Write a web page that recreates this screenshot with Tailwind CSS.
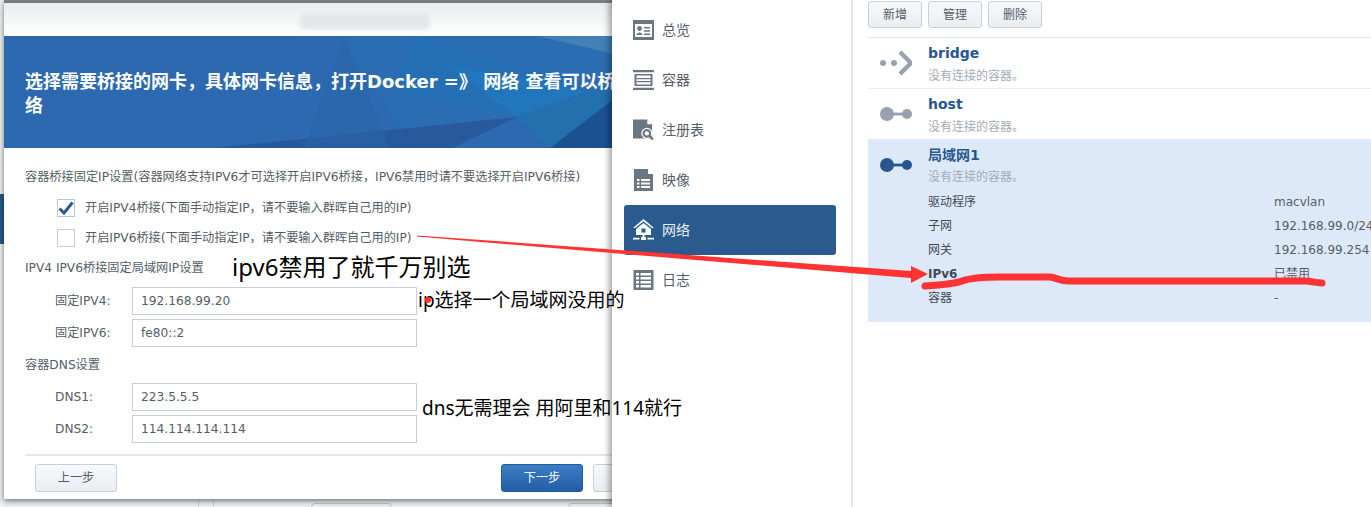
<!DOCTYPE html>
<html lang="zh-CN">

<head>
    <meta charset="UTF-8">
    <meta name="viewport" content="width=device-width, initial-scale=1.0">
    <script src="https://cdn.jsdelivr.net/npm/@tailwindcss/browser@4"></script>
    <title>Docker 网络设置</title>
</head>

<body class="bg-white">
    <div class="relative flex h-[507px] w-[1371px] overflow-hidden font-[family-name:'DejaVu_Sans','Noto_Sans_CJK_SC',sans-serif] text-xs text-[#555e68]">

        <!-- dialog side -->
        <div class="relative h-full w-[612px] shrink-0 overflow-hidden bg-[#f1f2f3]">
            <div class="absolute left-0 top-[194px] h-[50px] w-1 bg-[#2b5a8e]"></div>
            <div class="absolute left-[198px] top-[499px] h-2 w-4 border-x border-[#d5d8dc]"></div>
            <div class="absolute left-[311px] top-[503px] h-4 w-[81px] rounded-sm border border-[#c6ccd4] bg-[#eef1f5]"></div>
            <div class="absolute left-[568px] top-[503px] h-4 w-[81px] rounded-sm border border-[#c6ccd4] bg-[#eef1f5]"></div>

            <div class="relative ml-1 flex h-[499px] w-[640px] flex-col bg-white shadow-[0_2px_6px_rgba(0,0,0,0.55)]">
                <div class="h-[3px] bg-[#7a7d84]"></div>
                <div class="relative h-[33px] bg-gradient-to-b from-[#e9ebed] to-white">
                    <div class="absolute left-[296px] top-[11px] h-[15px] w-[130px] rounded bg-[#e3e5e7] blur-[2px]"></div>
                </div>

                <div class="relative h-28 overflow-hidden bg-[#2c69b0] pl-[21px] pt-[34px] text-lg leading-6 font-bold whitespace-nowrap text-white">
                    <svg class="absolute left-0 top-0" width="640" height="112" viewBox="0 0 640 112">
                        <polygon points="335,0 640,0 640,112 545,112 513,81 445,112 410,112" fill="#2a6db2" />
                        <polygon points="410,0 608,60 513,81 390,55" fill="#2470b5" opacity="0.75" />
                        <polygon points="445,30 608,60 513,81" fill="#2279bf" opacity="0.75" />
                        <polygon points="534,0 640,0 640,25" fill="#4480b6" />
                        <polygon points="210,112 513,81 448,112" fill="#27599c" />
                        <polygon points="513,81 640,34 640,112 546,112" fill="#246fae" />
                        <polygon points="546,112 640,40 640,112" fill="#1c5191" />
                        <polygon points="340,0 385,112 300,112" fill="#2c66aa" opacity="0.6" />
                    </svg>
                    <p class="relative">选择需要桥接的网卡，具体网卡信息，打开Docker =》 网络 查看可以桥接的网<br>络</p>
                </div>

                <div class="flex flex-1 flex-col pl-[21px] pt-[20px] text-[12.2px]">
                    <p class="h-[18px] leading-[18px]">容器桥接固定IP设置(容器网络支持IPV6才可选择开启IPV6桥接，IPV6禁用时请不要选择开启IPV6桥接)</p>

                    <label class="ml-8 mt-[13px] flex h-[18px] items-center gap-[10px]">
                        <span class="flex size-[18px] items-center justify-center border border-[#b9c6d6] bg-white">
                            <svg width="16" height="14" viewBox="0 0 16 14">
                                <path d="M1.5 7.5 L6 12 L14.5 1.5" fill="none" stroke="#2b5a8e" stroke-width="3" />
                            </svg>
                        </span>
                        开启IPV4桥接(下面手动指定IP，请不要输入群晖自己用的IP)
                    </label>
                    <label class="ml-8 mt-3 flex h-[18px] items-center gap-[10px]">
                        <span class="size-[18px] border border-[#c3cfdc] bg-white"></span>
                        开启IPV6桥接(下面手动指定IP，请不要输入群晖自己用的IP)
                    </label>

                    <p class="mt-3 h-[18px] leading-[18px]">IPV4 IPV6桥接固定局域网IP设置</p>

                    <div class="mt-[10px] flex flex-col gap-1">
                        <div class="flex items-center">
                            <span class="ml-[30px] w-[77px]">固定IPV4:</span>
                            <span class="flex h-7 w-[285px] items-center border border-[#c3cfdc] pl-2">192.168.99.20</span>
                        </div>
                        <div class="flex items-center">
                            <span class="ml-[30px] w-[77px]">固定IPV6:</span>
                            <span class="flex h-7 w-[285px] items-center border border-[#c3cfdc] pl-2">fe80::2</span>
                        </div>
                    </div>

                    <p class="mt-[9px] h-[18px] leading-[18px]">容器DNS设置</p>

                    <div class="mt-[9px] flex flex-col gap-1">
                        <div class="flex items-center">
                            <span class="ml-[30px] w-[77px]">DNS1:</span>
                            <span class="flex h-7 w-[285px] items-center border border-[#c3cfdc] pl-2">223.5.5.5</span>
                        </div>
                        <div class="flex items-center">
                            <span class="ml-[30px] w-[77px]">DNS2:</span>
                            <span class="flex h-7 w-[285px] items-center border border-[#c3cfdc] pl-2">114.114.114.114</span>
                        </div>
                    </div>

                    <div class="mt-[11px] flex items-center border-t-2 border-[#e6e6e6] pl-[10px] pt-2">
                        <button class="h-7 w-[82px] shrink-0 rounded-[3px] border border-[#c6d0dc] bg-gradient-to-b from-[#f7f9fb] to-[#e9eef4]">上一步</button>
                        <button class="ml-[384px] h-7 w-[82px] shrink-0 rounded-[3px] border border-[#1f5a9e] bg-gradient-to-b from-[#3c7dc4] to-[#235ea6] text-white">下一步</button>
                        <button class="ml-[10px] h-7 w-[82px] shrink-0 rounded-[3px] border border-[#c6d0dc] bg-gradient-to-b from-[#f7f9fb] to-[#e9eef4]"></button>
                    </div>
                </div>
            </div>
        </div>

        <!-- docker window side -->
        <div class="relative flex h-full flex-1 bg-white shadow-[-3px_0_6px_rgba(0,0,0,0.35)]">
            <nav class="flex w-[241px] shrink-0 flex-col border-r-2 border-[#e6e6e6] pl-3 pr-[15px] pt-[5px] text-sm">
                <a class="flex h-[50px] items-center gap-2 pl-[9px]">
                    <svg width="21" height="20" viewBox="0 0 21 20" fill="#6b7683">
                        <path fill-rule="evenodd" d="M0 0H21V20H0ZM2 4V17H19V4Z" />
                        <circle cx="6.5" cy="8.5" r="2.4" />
                        <path d="M3.5 15 C3.5 11.5 9.5 11.5 9.5 15Z M11 7H17V8.6H11Z M11 10.2H17V11.8H11Z M11 13.4H17V15H11Z" />
                    </svg>
                    总览
                </a>
                <a class="flex h-[50px] items-center gap-2 pl-[9px]">
                    <svg width="21" height="20" viewBox="0 0 21 20" fill="#6b7683">
                        <path fill-rule="evenodd" d="M0 0H21V2.2H0ZM0 17.8H21V20H0ZM1.5 4H19.5V16H1.5ZM3.5 5.6V14.4H17.5V5.6Z" />
                        <path d="M3.5 8H17.5V9.2H3.5ZM3.5 11H17.5V12.2H3.5Z" />
                    </svg>
                    容器
                </a>
                <a class="flex h-[50px] items-center gap-2 pl-[9px]">
                    <svg width="21" height="22" viewBox="0 0 22 22">
                        <path d="M0 0H15L20 5V20H0Z" fill="#6b7683" />
                        <path d="M15 0V5H20Z" fill="#fff" />
                        <circle cx="14.5" cy="14.5" r="5.8" fill="#fff" />
                        <circle cx="14.5" cy="14.5" r="3.4" fill="none" stroke="#6b7683" stroke-width="2.2" />
                        <path d="M17 17L21 21" stroke="#6b7683" stroke-width="2.4" />
                    </svg>
                    注册表
                </a>
                <a class="flex h-[50px] items-center gap-2 pl-[9px]">
                    <svg width="21" height="22" viewBox="0 0 21 22">
                        <path d="M1 0H14.5L20 5.5V22H1Z" fill="#6b7683" />
                        <path d="M15 0V5H20Z" fill="#fff" />
                        <path d="M4 10H6.5V12H4ZM8 10H17V12H8ZM4 13.5H6.5V15.5H4ZM8 13.5H17V15.5H8ZM4 17H6.5V19H4ZM8 17H17V19H8Z" fill="#fff" />
                    </svg>
                    映像
                </a>
                <a class="flex h-[50px] items-center gap-2 rounded-[3px] bg-[#2b5a8e] pl-[9px] text-[#e8f0f8]">
                    <svg width="21" height="22" viewBox="0 0 21 22" fill="#fff">
                        <path d="M10.5 0L21 9H19L10.5 2.2L2 9H0Z" />
                        <path fill-rule="evenodd" d="M10.5 4L18 10V16H3V10ZM8.5 9.5V13.5H12.5V9.5Z" />
                        <path d="M9.5 16H11.5V18H13V21H8V18H9.5ZM0 18.8H6.5V20.4H0ZM14.5 18.8H21V20.4H14.5Z" />
                    </svg>
                    网络
                </a>
                <a class="flex h-[50px] items-center gap-2 pl-[9px]">
                    <svg width="21" height="20" viewBox="0 0 21 20">
                        <rect width="20" height="20" x="0.5" fill="#6b7683" />
                        <path d="M3 3H6V5.5H3ZM7.5 3H18V5.5H7.5ZM3 7H6V9.5H3ZM7.5 7H18V9.5H7.5ZM3 11H6V13.5H3ZM7.5 11H18V13.5H7.5ZM3 15H6V17.5H3ZM7.5 15H18V17.5H7.5Z" fill="#fff" />
                    </svg>
                    日志
                </a>
            </nav>

            <main class="flex-1 pl-[15px]">
                <div class="flex h-[38px] gap-[6px] border-b border-[#dfe5ec] pt-px">
                    <button class="h-[27px] w-[54px] rounded-[3px] border border-[#c6d0dc] bg-gradient-to-b from-[#f7f9fb] to-[#e9eef4]">新增</button>
                    <button class="h-[27px] w-[54px] rounded-[3px] border border-[#c6d0dc] bg-gradient-to-b from-[#f7f9fb] to-[#e9eef4]">管理</button>
                    <button class="h-[27px] w-[54px] rounded-[3px] border border-[#c6d0dc] bg-gradient-to-b from-[#f7f9fb] to-[#e9eef4]">删除</button>
                </div>

                <div class="flex h-[51px] border-b border-[#e8ecf0]">
                    <div class="flex w-[60px] items-center pl-3">
                        <svg width="32" height="26" viewBox="0 0 32 26" fill="#98a2ae">
                            <circle cx="3" cy="13" r="3" />
                            <circle cx="14" cy="13" r="3" />
                            <path d="M20 2L31 13L20 24" fill="none" stroke="#98a2ae" stroke-width="4.4" />
                        </svg>
                    </div>
                    <div>
                        <p class="mt-1 h-[22px] text-sm leading-[22px] font-bold text-[#285690]">bridge</p>
                        <p class="mt-[2px] text-xs leading-5 text-[#a3acb6]">没有连接的容器。</p>
                    </div>
                </div>

                <div class="flex h-[50px]">
                    <div class="flex w-[60px] items-center pl-3">
                        <svg width="32" height="14" viewBox="0 0 32 14" fill="#98a2ae">
                            <circle cx="7" cy="7" r="7" />
                            <circle cx="27" cy="7" r="5" />
                            <rect x="10" y="5.6" width="14" height="2.8" />
                        </svg>
                    </div>
                    <div>
                        <p class="mt-1 h-[22px] text-sm leading-[22px] font-bold text-[#285690]">host</p>
                        <p class="mt-[2px] text-xs leading-5 text-[#a3acb6]">没有连接的容器。</p>
                    </div>
                </div>

                <div class="flex h-[183px] bg-[#dde9f9]">
                    <div class="flex h-[52px] w-[60px] items-center pl-3">
                        <svg width="32" height="14" viewBox="0 0 32 14" fill="#285690">
                            <circle cx="7" cy="7" r="7" />
                            <circle cx="27" cy="7" r="5" />
                            <rect x="10" y="5.6" width="14" height="2.8" />
                        </svg>
                    </div>
                    <div class="flex-1">
                        <p class="mt-[5px] h-[22px] text-sm leading-[22px] font-bold text-[#285690]">局域网1</p>
                        <p class="mt-[1px] text-xs leading-5 text-[#a3acb6]">没有连接的容器。</p>
                        <div class="mt-[3px] grid grid-cols-[346px_1fr] text-xs leading-6 whitespace-nowrap">
                            <span class="text-[#414b55]">驱动程序</span><span>macvlan</span>
                            <span class="text-[#414b55]">子网</span><span>192.168.99.0/24</span>
                            <span class="text-[#414b55]">网关</span><span>192.168.99.254</span>
                            <span class="font-bold text-[#414b55]">IPv6</span><span>已禁用</span>
                            <span class="text-[#414b55]">容器</span><span>-</span>
                        </div>
                    </div>
                </div>
            </main>
        </div>

        <!-- hand drawn notes on top of the screenshot -->
        <p class="absolute left-[232px] top-[250px] font-[family-name:'Noto_Sans','Noto_Sans_CJK_SC',sans-serif] text-2xl leading-[34px] whitespace-nowrap text-black">ipv6禁用了就千万别选</p>
        <p class="absolute left-[418px] top-[287px] font-[family-name:'Noto_Sans','Noto_Sans_CJK_SC',sans-serif] text-[19px] leading-[26px] whitespace-nowrap text-black">ip选择一个局域网没用的</p>
        <p class="absolute left-[422px] top-[395px] font-[family-name:'Noto_Sans','Noto_Sans_CJK_SC',sans-serif] text-[19px] leading-[26px] whitespace-nowrap text-black">dns无需理会 用阿里和114就行</p>
        <span class="absolute left-[425px] top-[297px] size-[6px] rounded-full bg-[#ff3333]"></span>

        <svg class="pointer-events-none absolute left-0 top-0" width="1371" height="507" viewBox="0 0 1371 507">
            <polygon points="417,235.4 911,271 911,266 928,274 911,283 911,278 850,273 417,236.6" fill="#ff3333" />
            <path d="M925,286 C940,285 955,284 962,281 C970,278 980,277 1000,277 L1050,277 C1058,278 1060,281 1068,281 L1305,281 C1312,281 1314,283 1322,283" fill="none" stroke="#ff3333" stroke-width="7" stroke-linecap="round" />
        </svg>
    </div>
</body>

</html>
